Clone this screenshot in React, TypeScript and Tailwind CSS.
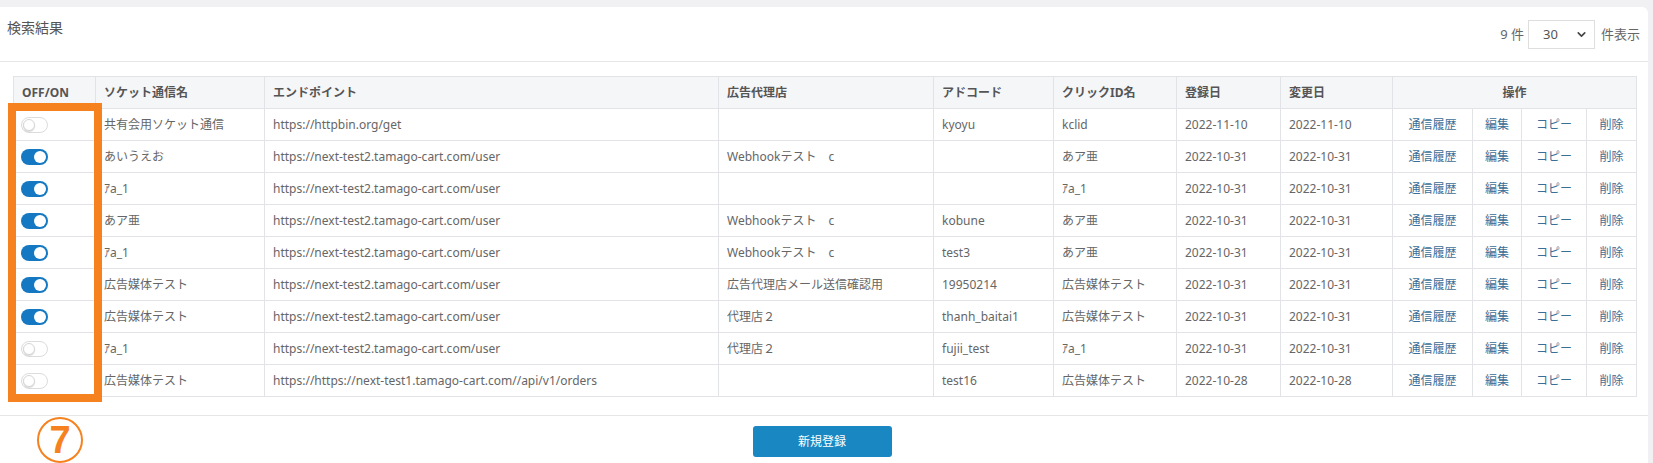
import React from "react";
import { ChevronDown } from "lucide-react";

type Row = {
  on: boolean;
  name: string;
  endpoint: string;
  agency: string;
  adcode: string;
  clickId: string;
  created: string;
  updated: string;
};

const rows: Row[] = [
  { on: false, name: "共有会用ソケット通信", endpoint: "https://httpbin.org/get", agency: "", adcode: "kyoyu", clickId: "kclid", created: "2022-11-10", updated: "2022-11-10" },
  { on: true, name: "あいうえお", endpoint: "https://next-test2.tamago-cart.com/user", agency: "Webhookテスト　c", adcode: "", clickId: "あア亜", created: "2022-10-31", updated: "2022-10-31" },
  { on: true, name: "ｱa_1", endpoint: "https://next-test2.tamago-cart.com/user", agency: "", adcode: "", clickId: "ｱa_1", created: "2022-10-31", updated: "2022-10-31" },
  { on: true, name: "あア亜", endpoint: "https://next-test2.tamago-cart.com/user", agency: "Webhookテスト　c", adcode: "kobune", clickId: "あア亜", created: "2022-10-31", updated: "2022-10-31" },
  { on: true, name: "ｱa_1", endpoint: "https://next-test2.tamago-cart.com/user", agency: "Webhookテスト　c", adcode: "test3", clickId: "あア亜", created: "2022-10-31", updated: "2022-10-31" },
  { on: true, name: "広告媒体テスト", endpoint: "https://next-test2.tamago-cart.com/user", agency: "広告代理店メール送信確認用", adcode: "19950214", clickId: "広告媒体テスト", created: "2022-10-31", updated: "2022-10-31" },
  { on: true, name: "広告媒体テスト", endpoint: "https://next-test2.tamago-cart.com/user", agency: "代理店２", adcode: "thanh_baitai1", clickId: "広告媒体テスト", created: "2022-10-31", updated: "2022-10-31" },
  { on: false, name: "ｱa_1", endpoint: "https://next-test2.tamago-cart.com/user", agency: "代理店２", adcode: "fujii_test", clickId: "ｱa_1", created: "2022-10-31", updated: "2022-10-31" },
  { on: false, name: "広告媒体テスト", endpoint: "https://https://next-test1.tamago-cart.com//api/v1/orders", agency: "", adcode: "test16", clickId: "広告媒体テスト", created: "2022-10-28", updated: "2022-10-28" },
];

function Toggle({ on }: { on: boolean }) {
  if (on) {
    return (
      <div className="w-[27px] h-[16px] rounded-full bg-[#1479c2] flex items-center justify-end pr-[2px]">
        <div className="w-[12px] h-[12px] rounded-full bg-white" />
      </div>
    );
  }
  return (
    <div className="w-[27px] h-[16px] rounded-full bg-white border border-[#dcdcdc] flex items-center pl-[1px]">
      <div className="w-[12px] h-[12px] rounded-full bg-white border border-[#d6d6d6] shadow-[0_1px_1px_rgba(0,0,0,0.15)]" />
    </div>
  );
}

const thBase = "border border-[#e1e3e6] bg-[#f5f6f8] font-bold text-[#555] px-[8px] h-[32px] py-0";
const th = thBase + " text-left";
const td = "border border-[#e1e3e6] text-[#666] px-[8px] h-[32px] py-0 whitespace-nowrap";
const link = "border border-[#e1e3e6] text-[#3b6e96] text-center h-[32px] py-0 whitespace-nowrap";

export default function App() {
  return (
    <div
      className="relative w-[1653px] h-[463px] overflow-hidden bg-[#f1f1f4] pt-[7px] pr-[5px]"
      style={{ fontFamily: '"Noto Sans", "Noto Sans CJK JP", sans-serif' }}
    >
      <div className="bg-white rounded-tr-[6px] h-[470px]">
        <div className="h-[55px] border-b border-[#e6e6e6] flex items-start justify-between pl-[7px] pr-[8px]">
          <div className="pt-[10px] text-[14px] text-[#555]">検索結果</div>
          <div className="pt-[13px] flex items-center text-[13px] text-[#666]">
            <span className="mr-[4px]">9 件</span>
            <div className="w-[67px] h-[29px] border border-[#dedede] flex items-center justify-between pl-[14px] pr-[6px] text-[13px] text-[#555]">
              <span>30</span>
              <ChevronDown size={13} strokeWidth={3} className="text-[#444]" />
            </div>
            <span className="ml-[6px] text-[13px]">件表示</span>
          </div>
        </div>

        <div className="pt-[14px] pl-[13px] pr-[12px]">
          <table className="border-collapse table-fixed text-[12px] w-[1623px]">
            <colgroup>
              <col className="w-[82px]" />
              <col className="w-[169px]" />
              <col className="w-[454px]" />
              <col className="w-[215px]" />
              <col className="w-[120px]" />
              <col className="w-[123px]" />
              <col className="w-[104px]" />
              <col className="w-[112px]" />
              <col className="w-[80px]" />
              <col className="w-[49px]" />
              <col className="w-[65px]" />
              <col className="w-[50px]" />
            </colgroup>
            <thead>
              <tr>
                <th className={th}>OFF/ON</th>
                <th className={th}>ソケット通信名</th>
                <th className={th}>エンドポイント</th>
                <th className={th}>広告代理店</th>
                <th className={th}>アドコード</th>
                <th className={th}>クリックID名</th>
                <th className={th}>登録日</th>
                <th className={th}>変更日</th>
                <th colSpan={4} className={thBase + " text-center"}>操作</th>
              </tr>
            </thead>
            <tbody>
              {rows.map((r, i) => (
                <tr key={i}>
                  <td className="border border-[#e1e3e6] h-[32px] py-0 pl-[7px]">
                    <Toggle on={r.on} />
                  </td>
                  <td className={td}>{r.name}</td>
                  <td className={td}>{r.endpoint}</td>
                  <td className={td}>{r.agency}</td>
                  <td className={td}>{r.adcode}</td>
                  <td className={td}>{r.clickId}</td>
                  <td className={td}>{r.created}</td>
                  <td className={td}>{r.updated}</td>
                  <td className={link}>通信履歴</td>
                  <td className={link}>編集</td>
                  <td className={link}>コピー</td>
                  <td className={link}>削除</td>
                </tr>
              ))}
            </tbody>
          </table>
        </div>

        <div className="mt-[18px] border-t border-[#e6e6e6] flex justify-center pt-[10px]">
          <button className="w-[139px] h-[31px] rounded-[3px] bg-[#1887c2] text-white text-[12px] ml-[-4px]">
            新規登録
          </button>
        </div>
      </div>

      <div className="absolute left-[8px] top-[103px] w-[94px] h-[299px] border-[8px] border-[#f5821f]" />
      <div className="absolute left-[37px] top-[417px] w-[46px] h-[46px] rounded-full border-[2px] border-[#f5821f] flex items-center justify-center">
        <span
          className="text-[#f5821f] text-[38px] font-bold leading-none"
          style={{ fontFamily: '"Liberation Sans", sans-serif' }}
        >
          7
        </span>
      </div>
    </div>
  );
}
